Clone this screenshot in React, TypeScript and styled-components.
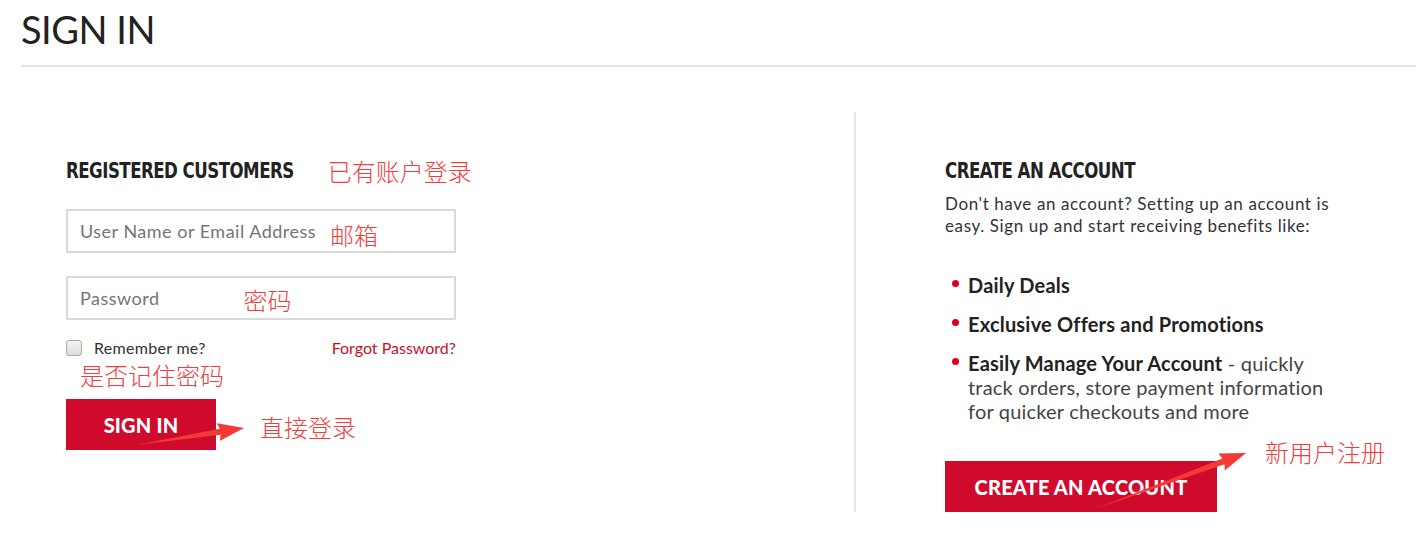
import React from "react";
import styled, { createGlobalStyle } from "styled-components";

const GlobalStyle = createGlobalStyle`
    html, body {
        margin: 0;
        padding: 0;
        background: #ffffff;
    }

    body {
        font-family: "Lato", "Open Sans", "Noto Sans CJK SC", sans-serif;
        color: #222222;
    }

    * {
        box-sizing: border-box;
    }
`;

const RED = "#d00a2c";
const NOTE = "#f43c3c";

function Arrow({ width, height, from, to }: { width: number; height: number; from: [number, number]; to: [number, number] }) {
    const [x1, y1] = from;
    const [x2, y2] = to;
    const dx = x2 - x1;
    const dy = y2 - y1;
    const len = Math.sqrt(dx * dx + dy * dy);
    const ux = dx / len;
    const uy = dy / len;
    const nx = -uy;
    const ny = ux;
    const headLen = 24;
    const headW = 9;
    const bx = x2 - ux * headLen;
    const by = y2 - uy * headLen;
    const nb = 3;
    const shape = [
        `${x1},${y1}`,
        `${bx + nx * nb},${by + ny * nb}`,
        `${bx + nx * headW - ux * 2},${by + ny * headW - uy * 2}`,
        `${x2},${y2}`,
        `${bx - nx * headW - ux * 2},${by - ny * headW - uy * 2}`,
        `${bx - nx * nb},${by - ny * nb}`,
    ].join(" ");

    return (
        <svg width={width} height={height} viewBox={`0 0 ${width} ${height}`}>
            <polygon points={shape} fill="#f23a36" />
        </svg>
    );
}

function App() {
    return (
        <Page>
            <GlobalStyle />
            <Header>
                <Title>SIGN IN</Title>
            </Header>
            <Columns>
                <LeftColumn>
                    <HeadingRow>
                        <SectionHeading>REGISTERED CUSTOMERS</SectionHeading>
                        <Note $size={24} $gap={3}>已有账户登录</Note>
                    </HeadingRow>

                    <Field>
                        <Placeholder>User Name or Email Address</Placeholder>
                        <Note $size={24} $offset={4} $gap={14}>邮箱</Note>
                    </Field>

                    <Field>
                        <Placeholder>Password</Placeholder>
                        <Note $size={24} $offset={2} $gap={84}>密码</Note>
                    </Field>

                    <OptionsRow>
                        <CheckLabel>
                            <CheckBox />
                            Remember me?
                        </CheckLabel>
                        <ForgotLink>Forgot Password?</ForgotLink>
                    </OptionsRow>

                    <RememberNote>是否记住密码</RememberNote>

                    <ActionRow>
                        <PrimaryButton $width={150}>SIGN IN</PrimaryButton>
                        <Note $size={24} $gap={44} $offset={2}>直接登录</Note>
                        <SignInArrow>
                            <Arrow width={120} height={30} from={[2, 27]} to={[110, 10]} />
                        </SignInArrow>
                    </ActionRow>
                </LeftColumn>

                <Divider />

                <RightColumn>
                    <SectionHeading>CREATE AN ACCOUNT</SectionHeading>
                    <Intro>
                        Don't have an account? Setting up an account is easy. Sign up and start receiving benefits like:
                    </Intro>

                    <Benefits>
                        <Benefit>
                            <strong>Daily Deals</strong>
                        </Benefit>
                        <Benefit>
                            <strong>Exclusive Offers and Promotions</strong>
                        </Benefit>
                        <Benefit>
                            <strong>Easily Manage Your Account</strong> - quickly track orders, store payment information for quicker checkouts and more
                        </Benefit>
                    </Benefits>

                    <CreateRow>
                        <PrimaryButton $width={272}>CREATE AN ACCOUNT</PrimaryButton>
                        <Note $size={24} $gap={48} $offset={-35}>新用户注册</Note>
                        <CreateArrow>
                            <Arrow width={160} height={62} from={[2, 58]} to={[153, 2]} />
                        </CreateArrow>
                    </CreateRow>
                </RightColumn>
            </Columns>
        </Page>
    );
}

const Page = styled.div`
    width: 1416px;
    height: 551px;
    padding-left: 21px;
    overflow: hidden;
`;

const Header = styled.header`
    height: 67px;
    border-bottom: 2px solid #e4e4e4;
    padding-top: 6px;
`;

const Title = styled.h1`
    margin: 0;
    font-family: "Lato", sans-serif;
    font-weight: 400;
    font-size: 38px;
    line-height: 46px;
    letter-spacing: -0.5px;
    color: #222222;
`;

const Columns = styled.main`
    display: grid;
    grid-template-columns: 833px 2px 1fr;
    margin-top: 45px;
`;

const LeftColumn = styled.section`
    padding: 44px 0 0 45px;
    display: flex;
    flex-direction: column;
`;

const RightColumn = styled.section`
    padding: 44px 0 0 89px;
    display: flex;
    flex-direction: column;
`;

const Divider = styled.div`
    height: 400px;
    background: #e4e4e4;
`;

const HeadingRow = styled.div`
    display: flex;
    align-items: center;
`;

const SectionHeading = styled.h2`
    margin: 0;
    font-family: "DejaVu Sans Condensed", "DejaVu Sans", sans-serif;
    font-stretch: condensed;
    font-weight: 700;
    font-size: 21px;
    line-height: 30px;
    letter-spacing: -0.6px;
    color: #222222;
    transform: scaleX(0.88);
    transform-origin: left center;
`;

const Note = styled.span<{ $size: number; $offset?: number; $gap?: number }>`
    font-family: "Noto Sans CJK SC", sans-serif;
    font-weight: 300;
    font-size: ${(p) => p.$size}px;
    line-height: 1;
    color: ${NOTE};
    margin-left: ${(p) => p.$gap ?? 0}px;
    position: relative;
    top: ${(p) => p.$offset ?? 0}px;
    white-space: nowrap;
`;

const Field = styled.div`
    width: 390px;
    height: 44px;
    margin-top: 23px;
    border: 2px solid #d9d9d9;
    display: flex;
    align-items: center;
    padding-left: 12px;
`;

const Placeholder = styled.span`
    font-family: "Lato", sans-serif;
    font-size: 18px;
    letter-spacing: 0.5px;
    color: #757575;
`;

const OptionsRow = styled.div`
    width: 390px;
    margin-top: 18px;
    display: flex;
    align-items: center;
    justify-content: space-between;
`;

const CheckLabel = styled.label`
    display: flex;
    align-items: center;
    gap: 12px;
    font-family: "Lato", sans-serif;
    font-size: 16px;
    letter-spacing: 0.3px;
    color: #333333;
`;

const CheckBox = styled.span`
    width: 16px;
    height: 16px;
    border: 1px solid #a9a9a9;
    border-radius: 3px;
    background: linear-gradient(#f4f4f4, #dcdcdc);
`;

const ForgotLink = styled.a`
    font-family: "Lato", sans-serif;
    font-size: 16px;
    color: #c8102e;
    cursor: pointer;
`;

const RememberNote = styled.div`
    font-family: "Noto Sans CJK SC", sans-serif;
    font-weight: 300;
    font-size: 24px;
    line-height: 28px;
    color: ${NOTE};
    margin: 4px 0 0 14px;
`;

const ActionRow = styled.div`
    position: relative;
    display: flex;
    align-items: center;
    margin-top: 10px;
`;

const CreateRow = styled.div`
    position: relative;
    display: flex;
    align-items: center;
    margin-top: 38px;
`;

const PrimaryButton = styled.button<{ $width: number }>`
    width: ${(p) => p.$width}px;
    height: 51px;
    border: none;
    outline: none;
    background: ${RED};
    color: #ffffff;
    font-family: "Lato", sans-serif;
    font-weight: 900;
    font-size: 20px;
    letter-spacing: 0.2px;
    cursor: pointer;
    flex-shrink: 0;
`;

const SignInArrow = styled.div`
    position: absolute;
    left: 68px;
    top: 19px;
    line-height: 0;
`;

const CreateArrow = styled.div`
    position: absolute;
    left: 148px;
    top: -10px;
    line-height: 0;
`;

const Intro = styled.p`
    margin: 7px 0 0;
    width: 410px;
    font-family: "Lato", sans-serif;
    font-size: 17px;
    line-height: 22px;
    letter-spacing: 0.6px;
    color: #333333;
`;

const Benefits = styled.ul`
    list-style: none;
    margin: 36px 0 0;
    padding: 0 0 0 23px;
    width: 387px;
    display: flex;
    flex-direction: column;
    gap: 15px;
`;

const Benefit = styled.li`
    position: relative;
    font-family: "Lato", sans-serif;
    font-size: 20px;
    line-height: 24px;
    letter-spacing: 0.2px;
    color: #444444;

    strong {
        font-weight: 700;
        color: #222222;
    }

    &::before {
        content: "";
        position: absolute;
        left: -16px;
        top: 7px;
        width: 7px;
        height: 7px;
        border-radius: 50%;
        background: #e0001b;
    }
`;

export default App;
